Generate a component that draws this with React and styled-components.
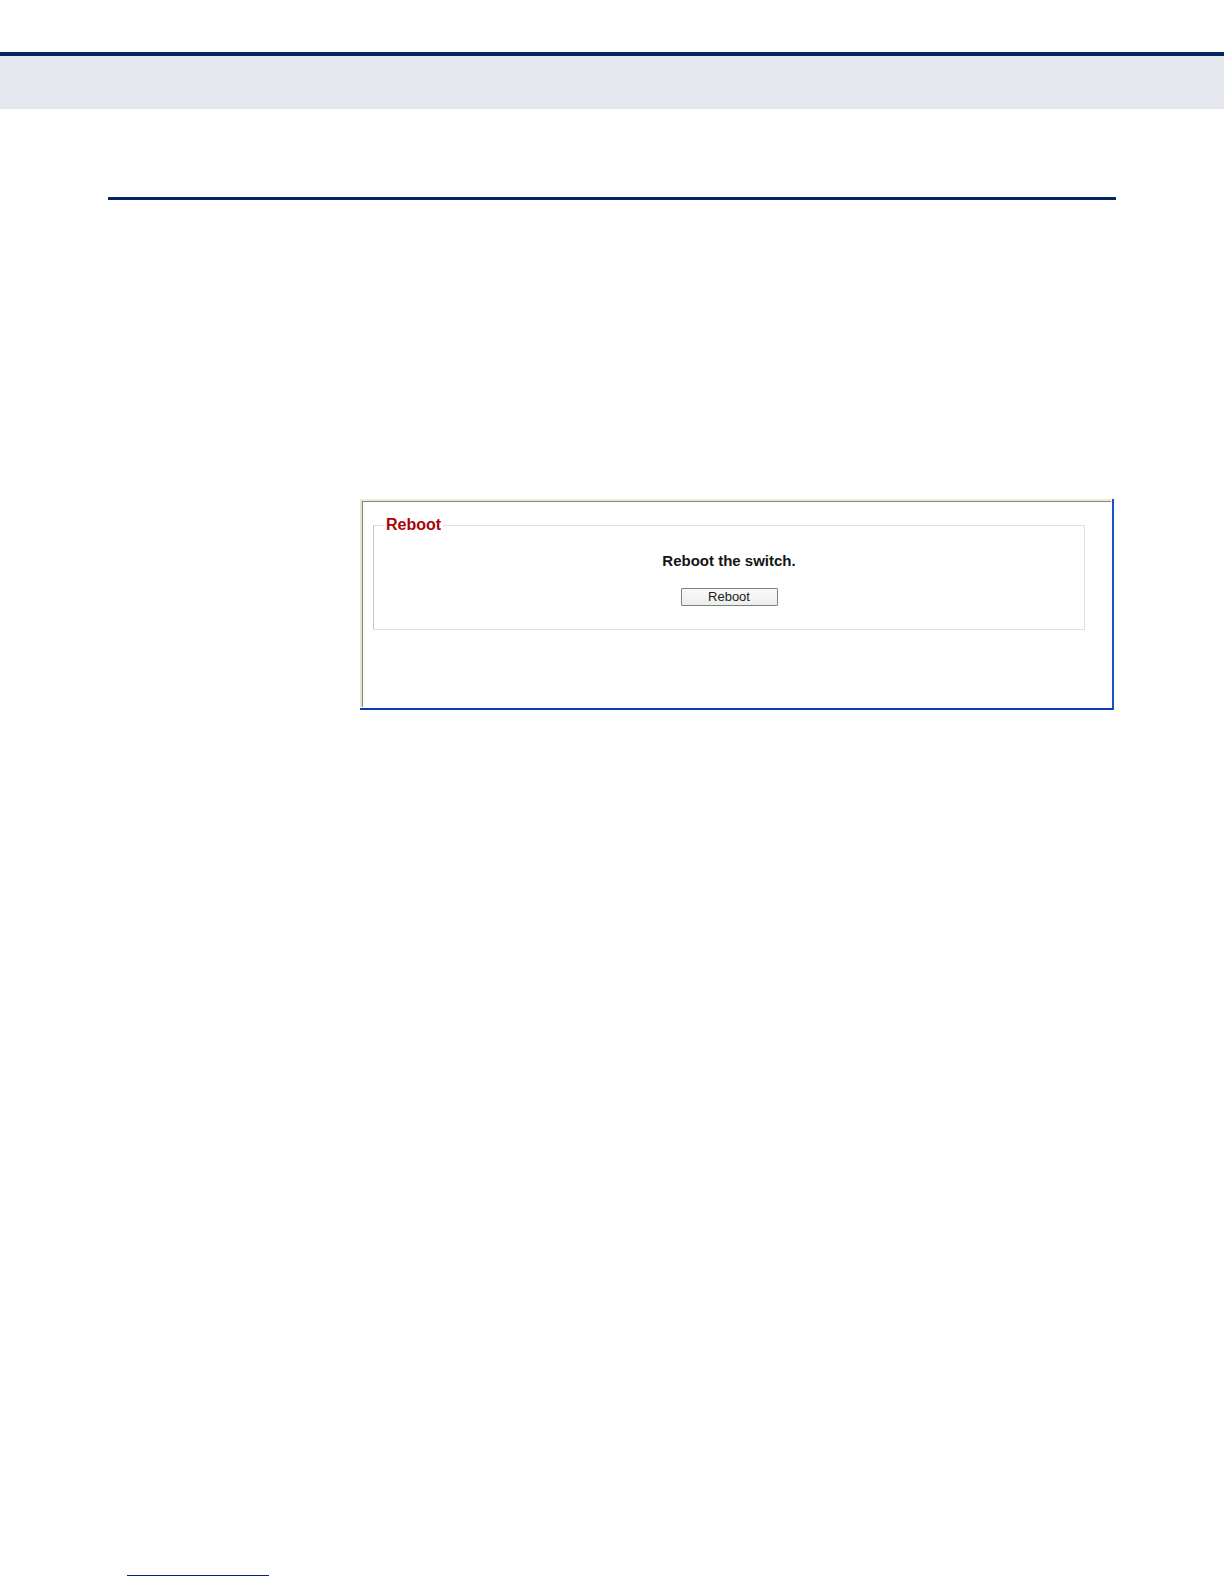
import React from "react";
import styled, { createGlobalStyle } from "styled-components";

const GlobalStyle = createGlobalStyle`
  * {
    box-sizing: border-box;
  }

  body {
    margin: 0;
    background: #fff;
    font-family: "Liberation Sans", Arial, sans-serif;
  }
`;

const Page = styled.div`
  display: flex;
  flex-direction: column;
  min-height: 100vh;
  padding-top: 52px;
`;

const HeaderBand = styled.header`
  height: 57px;
  border-top: 4px solid #04265c;
  background: #e5e8ef;
`;

const Content = styled.main`
  flex: 1;
  padding: 88px 108px 0;
`;

const Rule = styled.hr`
  height: ${props => props.$thickness};
  width: ${props => props.$width || "auto"};
  margin: 0;
  border: 0;
  background: ${props => props.$color};
`;

const Panel = styled.section`
  margin: 299px 2px 0 252px;
  padding: 0 1px 1px 0;
  border-right: 2px solid #1c4ed2;
  border-bottom: 2px solid #0a3cb8;
`;

const PanelBevel = styled.div`
  border-top: 2px solid #eaecd9;
  border-left: 2px solid #e4e6cf;
`;

const PanelBody = styled.div`
  padding: 14px 26px 77px 10px;
  border-top: 1px solid #85886f;
  border-left: 1px solid #85886f;
`;

const Group = styled.fieldset`
  display: flex;
  flex-direction: column;
  align-items: center;
  min-width: 0;
  margin: 0;
  padding: 18px 10px 23px;
  border: 1px solid #dedede;
  border-left-color: #c6c6c6;
  border-radius: 1px;
`;

const GroupTitle = styled.legend`
  padding: 0 2px;
  color: #a80508;
  font-size: 16px;
  font-weight: bold;
  line-height: 18px;
`;

const Message = styled.p`
  margin: 0 0 18px;
  color: #151515;
  font-size: 15px;
  font-weight: bold;
  line-height: 18px;
`;

const Button = styled.button`
  width: 97px;
  height: 18px;
  padding: 0;
  border: 1px solid #71828a;
  border-radius: 1px;
  background: linear-gradient(#fafafa, #ededea);
  color: #222;
  font-family: inherit;
  font-size: 13px;
  line-height: 16px;
`;

const Footer = styled.footer`
  padding: 0 127px 8px;
`;

const App = () => {
  return (
    <>
      <GlobalStyle />
      <Page>
        <HeaderBand />
        <Content>
          <Rule $thickness="3px" $color="#04265c" />
          <Panel>
            <PanelBevel>
              <PanelBody>
                <Group>
                  <GroupTitle>Reboot</GroupTitle>
                  <Message>Reboot the switch.</Message>
                  <Button type="button">Reboot</Button>
                </Group>
              </PanelBody>
            </PanelBevel>
          </Panel>
        </Content>
        <Footer>
          <Rule $thickness="1px" $width="142px" $color="#0b1c8c" />
        </Footer>
      </Page>
    </>
  );
};

export default App;
